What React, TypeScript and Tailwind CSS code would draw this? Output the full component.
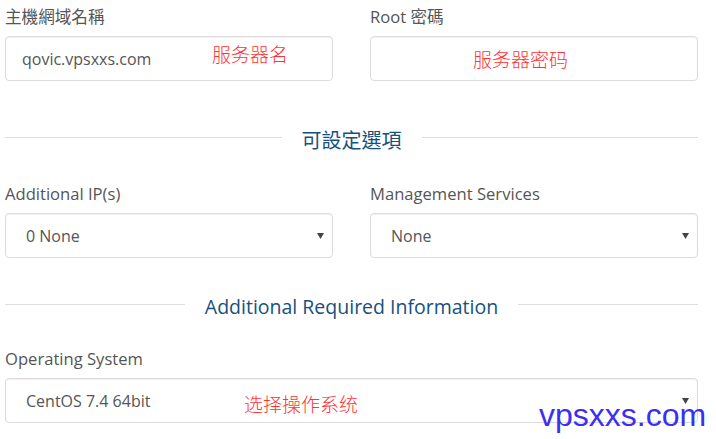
import React from "react";

const font = { fontFamily: '"Open Sans", "Noto Sans CJK TC", sans-serif' };

function Label({ children }: { children: React.ReactNode }) {
  return <div className="h-[24px] text-[16.6px] leading-[24px] text-[#555]">{children}</div>;
}

function Box({ children, select }: { children?: React.ReactNode; select?: boolean }) {
  return (
    <div className="relative mt-[7px] flex h-[45px] items-center rounded-[4px] border border-[#dcdcdc] bg-white shadow-[inset_0_1px_1px_rgba(0,0,0,0.06)]">
      {children}
      {select && (
        <svg className="absolute right-[8px] top-1/2 -translate-y-1/2" width="7" height="6" viewBox="0 0 7 6">
          <polygon points="0,0 7,0 3.5,6" fill="#444" />
        </svg>
      )}
    </div>
  );
}

function Divider({ children, size, shift }: { children: React.ReactNode; size: string; shift: string }) {
  return (
    <div className="flex h-[28px] items-center">
      <div className="h-px flex-1 bg-[#dedede]" />
      <div className={"relative px-[20px] leading-[28px] text-[#16517e] " + size + " " + shift}>{children}</div>
      <div className="h-px flex-1 bg-[#dedede]" />
    </div>
  );
}

const red = "absolute text-[19px] leading-[24px] text-[#ff3333]";
const redFont = { fontFamily: '"Noto Sans CJK SC", sans-serif', fontWeight: 300 };

export default function App() {
  return (
    <div className="relative h-[439px] w-[716px] overflow-hidden bg-white" style={font}>
      <div className="ml-[5px] w-[693px] pt-[5px]">
        <div className="grid grid-cols-2 gap-x-[37px]">
          <div>
            <Label>主機網域名稱</Label>
            <Box>
              <span className="pl-[16px] text-[16px] text-[#555]">qovic.vpsxxs.com</span>
              <span className={red + " left-[206px] top-[5px]"} style={redFont}>服务器名</span>
            </Box>
          </div>
          <div>
            <Label>Root 密碼</Label>
            <Box>
              <span className={red + " left-[102px] top-[10px]"} style={redFont}>服务器密码</span>
            </Box>
          </div>
        </div>

        <div className="mt-[42px]">
          <Divider size="text-[20px]" shift="top-[4px]">可設定選項</Divider>
        </div>

        <div className="mt-[31px] grid grid-cols-2 gap-x-[37px]">
          <div>
            <Label>Additional IP(s)</Label>
            <Box select>
              <span className="pl-[20px] text-[16px] text-[#555]">0 None</span>
            </Box>
          </div>
          <div>
            <Label>Management Services</Label>
            <Box select>
              <span className="pl-[20px] text-[16px] text-[#555]">None</span>
            </Box>
          </div>
        </div>

        <div className="mt-[32px]">
          <Divider size="text-[19.5px]" shift="top-[3px]">Additional Required Information</Divider>
        </div>

        <div className="mt-[29px]">
          <Label>Operating System</Label>
          <Box select>
            <span className="pl-[20px] text-[16px] text-[#555]">CentOS 7.4 64bit</span>
            <span className={red + " left-[238px] top-[13px]"} style={redFont}>选择操作系统</span>
          </Box>
        </div>
      </div>

      <div
        className="absolute left-[539px] top-[397px] text-[32px] leading-[36px] text-[#3a2ff2]"
        style={{ fontFamily: '"Liberation Sans", Arial, sans-serif' }}
      >
        vpsxxs.com
      </div>
    </div>
  );
}
